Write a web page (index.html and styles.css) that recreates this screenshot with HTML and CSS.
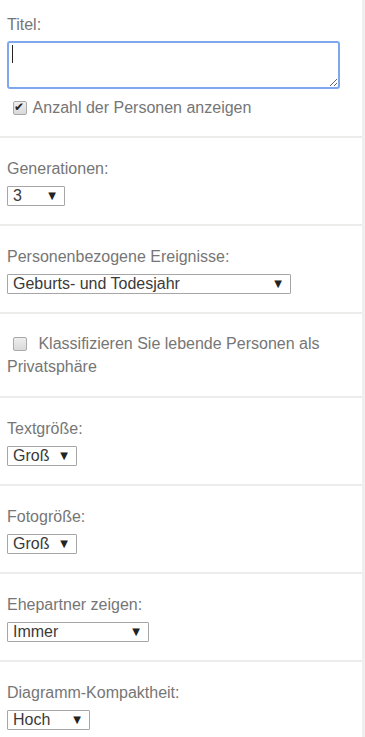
FILE: index.html
```html
<!DOCTYPE html>
<html lang="de">
<head>
  <meta charset="UTF-8" />
  <meta name="viewport" content="width=device-width,initial-scale=1.0" />
  <title>Diagramm-Einstellungen</title>
  <link rel="stylesheet" href="styles.css">
</head>
<body>
  <div class="page">
    <form class="panel">

      <!-- Titel -->
      <section class="row row--title">
        <label class="lbl" for="title">Titel:</label>
        <div class="area">
          <textarea id="title" class="area__input"></textarea>
        </div>
        <label class="check check--top">
          <input type="checkbox" checked> Anzahl der Personen anzeigen
        </label>
      </section>

      <section class="row">
        <label class="lbl" for="gen">Generationen:</label>
        <span class="sel sel--gen">
          <select id="gen">
            <option>3</option><option>4</option><option>5</option>
          </select>
        </span>
      </section>

      <section class="row">
        <label class="lbl" for="events">Personenbezogene Ereignisse:</label>
        <span class="sel sel--events">
          <select id="events">
            <option>Geburts- und Todesjahr</option>
            <option>Keine</option>
          </select>
        </span>
      </section>

      <section class="row row--check">
        <label class="check check--private">
          <input type="checkbox"> Klassifizieren Sie lebende Personen als Privatsphäre
        </label>
      </section>

      <section class="row">
        <label class="lbl" for="textsize">Textgröße:</label>
        <span class="sel sel--size">
          <select id="textsize">
            <option>Groß</option><option>Mittel</option><option>Klein</option>
          </select>
        </span>
      </section>

      <section class="row">
        <label class="lbl" for="photosize">Fotogröße:</label>
        <span class="sel sel--size">
          <select id="photosize">
            <option>Groß</option><option>Mittel</option><option>Klein</option>
          </select>
        </span>
      </section>

      <section class="row">
        <label class="lbl" for="spouse">Ehepartner zeigen:</label>
        <span class="sel sel--spouse">
          <select id="spouse">
            <option>Immer</option><option>Nie</option>
          </select>
        </span>
      </section>

      <section class="row">
        <label class="lbl" for="compact">Diagramm-Kompaktheit:</label>
        <span class="sel sel--compact">
          <select id="compact">
            <option>Hoch</option><option>Mittel</option><option>Niedrig</option>
          </select>
        </span>
      </section>

    </form>
    <div class="edge"></div>
  </div>
</body>
</html>
```

FILE: styles.css
```css
*{box-sizing:border-box;}
body{
  margin:0;
  font-family:"Liberation Sans",Arial,sans-serif;
  font-size:16px;
  line-height:23px;
  color:#767676;
  background:#fff;
}
.page{display:flex;min-height:100vh;}
.panel{flex:1;margin:0;}
.edge{width:3px;background:#efefef;}

/* 行 */
.row{
  padding:19px 7px 18px;
  border-bottom:2px solid #ececea;
}
.row--title{padding-top:13px;padding-bottom:17px;}
.row--check{padding:18px 7px 18px;}

.lbl{display:block;margin-bottom:6px;}
.row--title .lbl{margin-bottom:5px;}

/* テキストエリア */
.area{position:relative;width:333px;}
.area__input{
  display:block;
  width:333px;
  height:48px;
  border:2px solid #7ea7ee;
  border-radius:3px;
  font:inherit;
  outline:none;
}
.area::after{ /* カーソル */
  content:"";
  position:absolute;
  left:5px;top:4px;
  width:1px;height:18px;
  background:#222;
}

/* チェックボックス */
.check{display:block;}
.check--top{margin-top:7px;}
.check input{
  -webkit-appearance:none;
  appearance:none;
  position:relative;
  width:14px;height:14px;
  margin:0 2px 0 6px;
  vertical-align:-2px;
  border:1px solid #a9a9a9;
  border-radius:2px;
  background:linear-gradient(#eeeeee,#d9d9d9);
}
.check--private input{margin-right:7px;}
.check input:checked::after{
  content:"✔";
  position:absolute;
  left:0;top:-5px;
  font-family:"DejaVu Sans",sans-serif;
  font-size:12px;
  line-height:20px;
  color:#222;
}

/* セレクト */
.sel{position:relative;display:block;width:max-content;}
.sel select{
  -webkit-appearance:none;
  appearance:none;
  display:block;
  height:20px;
  padding:0 0 0 5px;
  border:1px solid #a6a6a6;
  border-radius:1px;
  background:#fff;
  font:inherit;
  line-height:18px;
  color:#3a3a3a;
}
.sel::after{
  content:"▼";
  position:absolute;
  right:9px;top:0;
  font-family:"DejaVu Sans",sans-serif;
  font-size:10px;
  line-height:20px;
  color:#222;
  pointer-events:none;
}
.sel--gen select{width:58px;}
.sel--events select{width:284px;}
.sel--size select{width:70px;}
.sel--spouse select{width:142px;}
.sel--compact select{width:83px;}
```
